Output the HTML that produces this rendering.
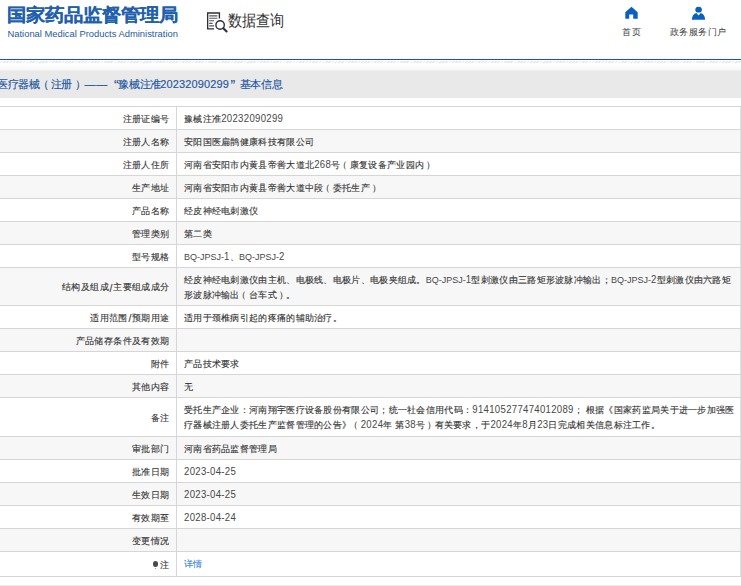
<!DOCTYPE html>
<html><head><meta charset="utf-8">
<style>
*{margin:0;padding:0;box-sizing:border-box}
html,body{text-spacing-trim:space-all;width:741px;height:586px;overflow:hidden;background:#fff;font-family:"Liberation Sans",sans-serif;color:#333;position:relative}
.abs{position:absolute;white-space:nowrap}
.logo-cn{left:7px;top:4px;font-size:19px;font-weight:bold;color:#2160ad;line-height:24px;-webkit-text-stroke:0.1px #2160ad;transform:scaleY(0.93);transform-origin:0 0}
.logo-en{left:7.5px;top:28.3px;font-size:9.4px;color:#275a9f;line-height:12px}
.sq{left:228px;top:11px;font-size:14px;color:#333;line-height:20px;transform:scaleY(1.13);transform-origin:0 60%}
.nav{top:26px;font-size:9px;letter-spacing:0.4px;color:#3a3a3a;line-height:12px}
.bline{left:0;top:59px;width:741px;height:1px;background:#2a5686}
.hatch{left:0;top:60.5px;width:741px;height:2.7px;background:repeating-linear-gradient(135deg,transparent 0 0.9px,#e4e6ea 0.9px 2.1px,transparent 2.1px 2.3px)}
.tint{left:0;top:58px;width:741px;height:1px;background:#f2fbfc}
.fade{left:0;top:64px;width:741px;height:6px;background:linear-gradient(#fff,#f7f7f7)}
.tbar{left:0;top:70px;width:741px;height:28px;background:linear-gradient(#efefef 0 1px,#e9e9e9 1px)}
.ttl{top:77px;font-size:11px;letter-spacing:-0.3px;color:#1d57a3;line-height:14px;-webkit-text-stroke:0.15px #1d57a3}
.q{font-size:14px;top:78px}
.row{position:absolute;left:-10px;width:751px;border-top:1px solid #d6d6d6;border-bottom:1px solid #d6d6d6;border-right:1px solid #e2e2e2;background:#fff}
.row.g{background:#f7f7f7}
.k,.v{-webkit-text-stroke:0.12px #333}
.v .n,.v .l{-webkit-text-stroke:0;color:#484848;display:inline-block;transform:scaleY(1.1);transform-origin:50% 80%;vertical-align:0}
.row::after{content:"";position:absolute;left:186px;top:0;bottom:0;width:1px;background:#d6d6d6}
.k{position:absolute;right:570.4px;top:2px;bottom:0;display:flex;align-items:center;font-size:9px;letter-spacing:0.4px;line-height:15px;text-align:right;white-space:nowrap}
.v{position:absolute;left:194px;top:0;font-size:9px;letter-spacing:0.3px;line-height:15.3px;white-space:nowrap}
.n{font-size:9.6px;letter-spacing:0.3px;line-height:10px;vertical-align:1px}
.l{font-size:9px;letter-spacing:0;line-height:10px;vertical-align:1px}
.pin{display:inline-block;width:5.4px;height:6px;border-radius:50% 50% 45% 45%;background:#4a4a4a;margin-right:2.2px;position:relative;top:-1.5px}
.pin::after{content:"";position:absolute;left:2.2px;top:7px;width:1px;height:1px;background:#999}
.foot{left:0;top:585px;width:741px;height:1px;background:#ececec}
.po{position:relative;left:-2.5px}
.pc{position:relative;left:2px}
.sl{font-size:10.5px;margin:0 0.3px 0 0.6px;line-height:10px}
.v a{-webkit-text-stroke:0.1px #3584dc}
a{color:#3584dc;text-decoration:none}
</style></head><body>
<div class="abs logo-cn">国家药品监督管理局</div>
<div class="abs logo-en">National Medical Products Administration</div>
<svg class="abs" style="left:205px;top:11px" width="24" height="23" viewBox="0 0 24 23">
 <path d="M14.4 7.6V2H2.65V17.8H9" fill="none" stroke="#2e2e38" stroke-width="1.35"/>
 <path d="M4.2 4.9h8.2M4.2 7.3h8.2M4.2 9.8h4.9M4.2 12.4h3.4M4.2 14.9h4.9" stroke="#555" stroke-width="1.1"/>
 <circle cx="15.1" cy="14" r="4.2" fill="#fff" stroke="#2e2e38" stroke-width="1.4"/>
 <path d="M18.3 17.2L21.6 20.5" stroke="#2e2e38" stroke-width="2.1" stroke-linecap="round"/>
</svg>
<div class="abs sq">数据查询</div>
<svg class="abs" style="left:624px;top:6px" width="15" height="14" viewBox="0 0 15 14">
 <path d="M7.5 0.8L1.3 6.3V12.8H5.2V8.6H9.2V12.8H13.7V6.3Z" fill="#0b5fc1"/>
</svg>
<div class="abs nav" style="left:622.4px">首页</div>
<svg class="abs" style="left:691px;top:5px" width="15" height="15" viewBox="0 0 15 15">
 <ellipse cx="7.6" cy="4.65" rx="3.3" ry="2.95" fill="#0b5fc1"/>
 <path d="M0.9 14.7C0.9 11 2.6 8.5 5.4 7.9L7.55 10.6L9.7 7.9C12.4 8.5 14.1 11 14.1 14.7Z" fill="#0b5fc1"/>
</svg>
<div class="abs nav" style="left:670px">政务服务门户</div>
<div class="abs tint"></div>
<div class="abs bline"></div>
<div class="abs fade"></div>
<div class="abs hatch"></div>
<div class="abs tbar"></div>
<div class="abs ttl" style="left:-3.2px">医疗器械</div>
<div class="abs ttl" style="left:37.5px">（</div>
<div class="abs ttl" style="left:50.5px">注册</div>
<div class="abs ttl" style="left:74.5px">）</div>
<div class="abs ttl" style="left:84.6px;letter-spacing:0.6px">——</div>
<div class="abs ttl q" style="left:114px">“</div>
<div class="abs ttl" style="left:118.2px">豫械注准</div>
<div class="abs ttl" style="left:160.2px;letter-spacing:0.15px">20232090299</div>
<div class="abs ttl q" style="left:230.5px">”</div>
<div class="abs ttl" style="left:239.8px">基本信息</div>
<div class="row" style="top:106px;height:24px"><div class="k">注册证编号</div><div class="v" style="padding-top:5px">豫械注准<span class="n">20232090299</span></div></div>
<div class="row g" style="top:129px;height:24px"><div class="k">注册人名称</div><div class="v" style="padding-top:5px">安阳国医扁鹊健康科技有限公司</div></div>
<div class="row" style="top:152px;height:24px"><div class="k">注册人住所</div><div class="v" style="padding-top:5px">河南省安阳市内黄县帝喾大道北<span class="n">268</span>号<span class="po">（</span>康复设备产业园内<span class="pc">）</span></div></div>
<div class="row g" style="top:175px;height:24px"><div class="k">生产地址</div><div class="v" style="padding-top:5px">河南省安阳市内黄县帝喾大道中段<span class="po">（</span>委托生产<span class="pc">）</span></div></div>
<div class="row" style="top:198px;height:24px"><div class="k">产品名称</div><div class="v" style="padding-top:5px">经皮神经电刺激仪</div></div>
<div class="row g" style="top:221px;height:24px"><div class="k">管理类别</div><div class="v" style="padding-top:5px">第二类</div></div>
<div class="row" style="top:244px;height:24px"><div class="k">型号规格</div><div class="v" style="padding-top:5px"><span class="l">BQ-JPSJ-</span><span class="n">1</span>、<span class="l">BQ-JPSJ-</span><span class="n">2</span></div></div>
<div class="row g" style="top:267px;height:39px"><div class="k two">结构及组成<span class=sl>/</span>主要组成成分</div><div class="v two" style="padding-top:5px">经皮神经电刺激仪由主机、电极线、电极片、电极夹组成。<span class="l">BQ-JPSJ-</span><span class="n">1</span>型刺激仪由三路矩形波脉冲输出；<span class="l">BQ-JPSJ-</span><span class="n">2</span>型刺激仪由六路矩<br>形波脉冲输出<span class="po">（</span>台车式<span class="pc">）</span>。</div></div>
<div class="row" style="top:305px;height:24px"><div class="k">适用范围<span class=sl>/</span>预期用途</div><div class="v" style="padding-top:5px">适用于颈椎病引起的疼痛的辅助治疗。</div></div>
<div class="row g" style="top:328px;height:24px"><div class="k">产品储存条件及有效期</div><div class="v" style="padding-top:5px"></div></div>
<div class="row" style="top:351px;height:24px"><div class="k">附件</div><div class="v" style="padding-top:5px">产品技术要求</div></div>
<div class="row g" style="top:374px;height:24px"><div class="k">其他内容</div><div class="v" style="padding-top:5px">无</div></div>
<div class="row" style="top:397px;height:40px"><div class="k two">备注</div><div class="v two" style="padding-top:5px">受托生产企业：河南翔宇医疗设备股份有限公司；统一社会信用代码：<span class="n">914105277474012089</span>； 根据《国家药监局关于进一步加强医<br>疗器械注册人委托生产监督管理的公告》<span class="po">（</span><span class="n">2024</span>年 第<span class="n">38</span>号<span class="pc">）</span>有关要求，于<span class="n">2024</span>年<span class="n">8</span>月<span class="n">23</span>日完成相关信息标注工作。</div></div>
<div class="row g" style="top:436px;height:24px"><div class="k">审批部门</div><div class="v" style="padding-top:5px">河南省药品监督管理局</div></div>
<div class="row" style="top:459px;height:24px"><div class="k">批准日期</div><div class="v" style="padding-top:5px"><span class="n">2023-04-25</span></div></div>
<div class="row g" style="top:482px;height:24px"><div class="k">生效日期</div><div class="v" style="padding-top:5px"><span class="n">2023-04-25</span></div></div>
<div class="row" style="top:505px;height:24px"><div class="k">有效期至</div><div class="v" style="padding-top:5px"><span class="n">2028-04-24</span></div></div>
<div class="row g" style="top:528px;height:24px"><div class="k">变更情况</div><div class="v" style="padding-top:5px"></div></div>
<div class="row" style="top:551px;height:26px"><div class="k"><i class="pin"></i>注</div><div class="v" style="padding-top:5px"><a>详情</a></div></div>
<div class="abs foot"></div>
</body></html>
